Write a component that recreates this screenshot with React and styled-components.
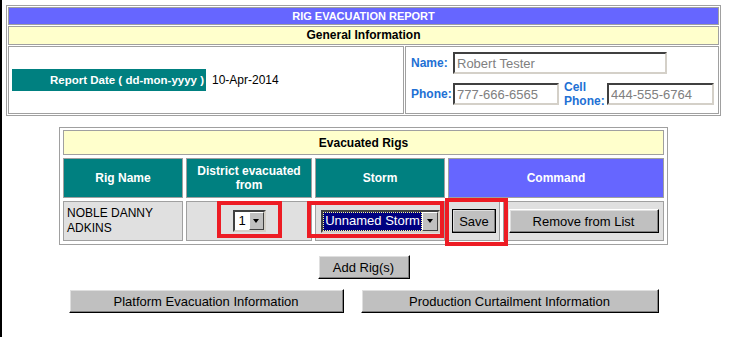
import React from "react";
import styled, { createGlobalStyle } from "styled-components";

const GlobalStyle = createGlobalStyle`
  body {
    margin: 0;
    background: #fff;
    font-family: "Liberation Sans", Arial, sans-serif;
  }
`;

const Page = styled.div`
  min-height: 100vh;
  box-sizing: border-box;
  border-left: 2px solid #000;
  padding: 5px 0 0 4px;
`;

const Wrapper = styled.div`
  width: 715px;
`;

const Report = styled.div`
  box-sizing: border-box;
  border: 1px solid #a0a0a0;
  padding: 1px;
  display: flex;
  flex-direction: column;
  gap: 1px;
`;

const Bar = styled.div`
  border: 1px solid #a0a0a0;
  background: ${({ $bg }) => $bg};
  color: ${({ $color }) => $color};
  font-size: ${({ $size }) => $size}px;
  font-weight: bold;
  line-height: ${({ $lh }) => $lh}px;
  text-align: center;
`;

const InfoRow = styled.div`
  display: flex;
  gap: 1px;
`;

const InfoCell = styled.div`
  box-sizing: border-box;
  border: 1px solid #a0a0a0;
  height: 68px;
  display: flex;
  flex-direction: column;
  justify-content: center;
  flex: ${({ $width }) => ($width ? `0 0 ${$width}px` : "1")};
  padding-left: ${({ $pad }) => $pad}px;
`;

const DateLine = styled.div`
  display: flex;
  align-items: center;
  gap: 6px;
  font-size: 12px;
`;

const DateLabel = styled.div`
  width: 194px;
  height: 22px;
  box-sizing: border-box;
  background: #008080;
  color: #fff;
  font-size: 11.5px;
  font-weight: bold;
  text-align: right;
  padding-right: 2px;
  line-height: 22px;
`;

const ContactGrid = styled.div`
  display: flex;
  flex-direction: column;
  gap: 6px;
`;

const ContactRow = styled.div`
  display: flex;
  align-items: center;
  height: ${({ $h }) => $h}px;
`;

const FieldLabel = styled.div`
  width: ${({ $width }) => $width}px;
  flex: none;
  margin-left: ${({ $gap }) => $gap || 0}px;
  color: #2270d4;
  font-size: 12px;
  font-weight: bold;
  line-height: 14px;
`;

const TextInput = styled.input`
  width: ${({ $width }) => $width}px;
  height: 22px;
  box-sizing: border-box;
  border: 2px solid;
  border-color: #404040 #d4d0c8 #d4d0c8 #404040;
  padding: 0 2px;
  font-family: "Liberation Sans", Arial, sans-serif;
  font-size: 13px;
  color: #808080;
  background: #fff;
  outline: none;
`;

const RigTable = styled.div`
  position: relative;
  width: 609px;
  box-sizing: border-box;
  margin: 11px auto 0;
  border: 1px solid #a0a0a0;
  padding: 2px 3px 3px;
  display: grid;
  grid-template-columns: 120px 126px 130px 52px 161px;
  grid-template-rows: 25px 40px 40px;
  gap: 3px;
`;

const Cell = styled.div`
  box-sizing: border-box;
  border: 1px solid #a0a0a0;
  display: flex;
  align-items: center;
  justify-content: ${({ $left }) => ($left ? "flex-start" : "center")};
  text-align: ${({ $left }) => ($left ? "left" : "center")};
  padding: 0 3px;
  background: ${({ $bg }) => $bg || "#e0e0e0"};
  color: ${({ $color }) => $color || "#000"};
  font-size: 12px;
  font-weight: ${({ $bold }) => ($bold ? "bold" : "normal")};
  line-height: ${({ $lh }) => $lh || 14}px;
  grid-column: ${({ $span }) => $span || "auto"};
`;

const SelectBox = styled.div`
  display: flex;
  width: ${({ $width }) => $width}px;
  height: ${({ $height }) => $height}px;
  box-sizing: border-box;
  border: 2px solid;
  border-color: #404040 #d4d0c8 #d4d0c8 #404040;
  background: #fff;
`;

const SelectValue = styled.div`
  flex: 1;
  font-size: 13px;
  line-height: 16px;
  padding: 1px 1px 0 2px;
  white-space: nowrap;
  overflow: hidden;
  background: ${({ $active }) => ($active ? "#000080" : "#fff")};
  color: ${({ $active }) => ($active ? "#fff" : "#000")};
  outline: ${({ $active }) => ($active ? "1px dotted #ffff90" : "none")};
  outline-offset: -1px;
`;

const DropButton = styled.div`
  flex: 0 0 ${({ $width }) => $width}px;
  box-sizing: border-box;
  background: #c0c0c0;
  border: 1px solid;
  border-color: #fff #404040 #404040 #fff;
  display: flex;
  align-items: center;
  justify-content: center;

  &::after {
    content: "";
    border-left: 3.5px solid transparent;
    border-right: 3.5px solid transparent;
    border-top: 4px solid #000;
  }
`;

const Button = styled.button`
  width: ${({ $width }) => $width}px;
  height: 24px;
  box-sizing: border-box;
  padding: 0;
  background: #c0c0c0;
  border: 1px solid;
  border-color: #fff #000 #000 #fff;
  box-shadow: inset -1px -1px #808080, inset 1px 1px #dfdfdf;
  font-family: "Liberation Sans", Arial, sans-serif;
  font-size: 13px;
  color: #000;
  outline: ${({ $default }) => ($default ? "1px solid #000" : "none")};
  outline-offset: -1px;
`;

const Mark = styled.div`
  position: absolute;
  box-sizing: border-box;
  border: 4px solid #ed1c24;
  pointer-events: none;
`;

const ButtonRow = styled.div`
  display: flex;
  justify-content: center;
  gap: 17px;
  margin-top: 10px;
`;

const marks = [
  { left: 157, top: 73, width: 65, height: 37 },
  { left: 247, top: 73, width: 137, height: 37 },
  { left: 385, top: 70, width: 63, height: 48 },
];

export default function App() {
  return (
    <>
      <GlobalStyle />
      <Page>
        <Wrapper>
          <Report>
            <Bar $bg="#6666ff" $color="#fff" $size={11} $lh={16}>
              RIG EVACUATION REPORT
            </Bar>
            <Bar $bg="#ffffcc" $color="#000" $size={12} $lh={17}>
              General Information
            </Bar>
            <InfoRow>
              <InfoCell $width={396} $pad={3}>
                <DateLine>
                  <DateLabel>Report Date ( dd-mon-yyyy )</DateLabel>
                  <span>10-Apr-2014</span>
                </DateLine>
              </InfoCell>
              <InfoCell $pad={5}>
                <ContactGrid>
                  <ContactRow $h={22}>
                    <FieldLabel $width={42}>Name:</FieldLabel>
                    <TextInput $width={214} readOnly value="Robert Tester" />
                  </ContactRow>
                  <ContactRow $h={28}>
                    <FieldLabel $width={42}>Phone:</FieldLabel>
                    <TextInput $width={106} readOnly value="777-666-6565" />
                    <FieldLabel $width={43} $gap={5}>
                      Cell
                      <br />
                      Phone:
                    </FieldLabel>
                    <TextInput $width={107} readOnly value="444-555-6764" />
                  </ContactRow>
                </ContactGrid>
              </InfoCell>
            </InfoRow>
          </Report>

          <RigTable>
            <Cell $span="1 / -1" $bg="#ffffcc" $bold>
              Evacuated Rigs
            </Cell>
            <Cell $bg="#008080" $color="#fff" $bold>
              Rig Name
            </Cell>
            <Cell $bg="#008080" $color="#fff" $bold>
              District evacuated
              <br />
              from
            </Cell>
            <Cell $bg="#008080" $color="#fff" $bold>
              Storm
            </Cell>
            <Cell $span="4 / 6" $bg="#6666ff" $color="#fff" $bold>
              Command
            </Cell>
            <Cell $left $lh={15}>
              NOBLE DANNY
              <br />
              ADKINS
            </Cell>
            <Cell>
              <SelectBox $width={33} $height={22}>
                <SelectValue>1</SelectValue>
                <DropButton $width={15} />
              </SelectBox>
            </Cell>
            <Cell>
              <SelectBox $width={119} $height={23}>
                <SelectValue $active>Unnamed Storm</SelectValue>
                <DropButton $width={16} />
              </SelectBox>
            </Cell>
            <Cell>
              <Button $width={44} $default>
                Save
              </Button>
            </Cell>
            <Cell>
              <Button $width={150}>Remove from List</Button>
            </Cell>
            {marks.map((m, i) => (
              <Mark key={i} style={m} />
            ))}
          </RigTable>

          <ButtonRow>
            <Button $width={92}>Add Rig(s)</Button>
          </ButtonRow>
          <ButtonRow>
            <Button $width={275}>Platform Evacuation Information</Button>
            <Button $width={298}>Production Curtailment Information</Button>
          </ButtonRow>
        </Wrapper>
      </Page>
    </>
  );
}
